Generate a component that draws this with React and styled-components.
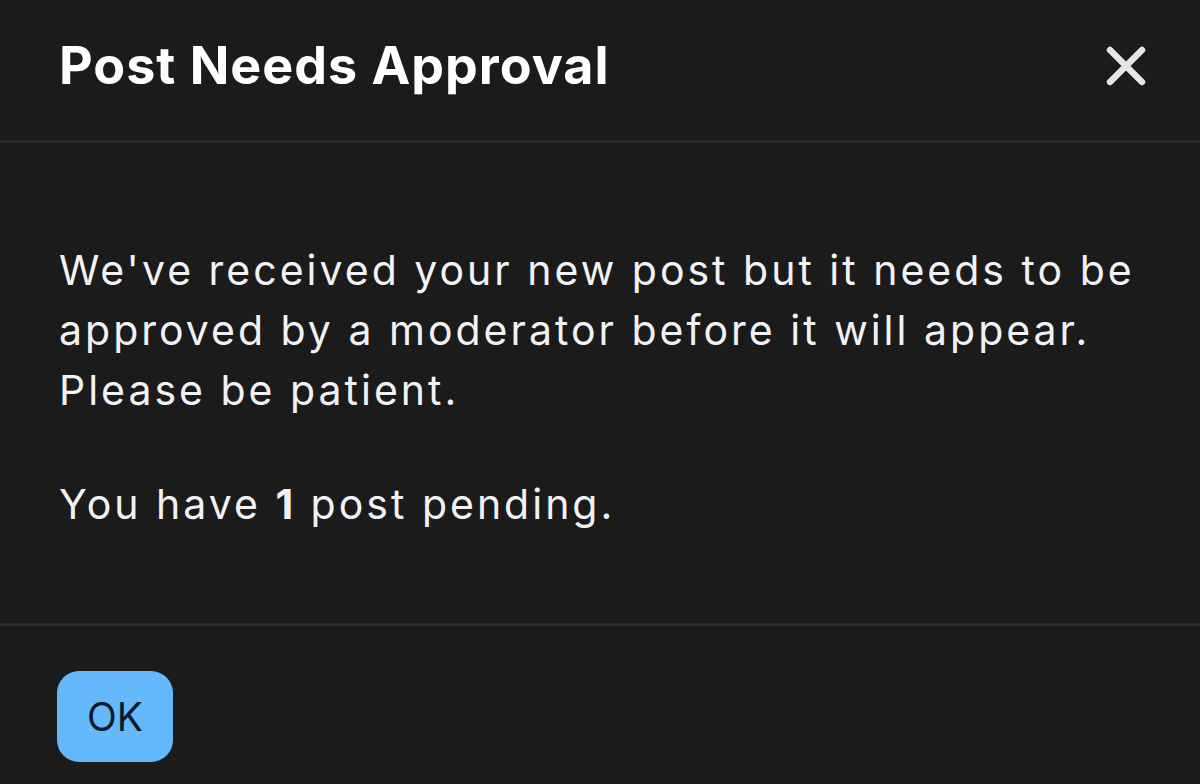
import React from "react";
import styled, { createGlobalStyle } from "styled-components";

const GlobalStyle = createGlobalStyle`
	html, body {
		margin: 0;
		padding: 0;
		background: #1b1b1c;
	}
	body {
		font-family: Inter, "Noto Sans", sans-serif;
		color: #f2f2f4;
	}
`;

const Modal = styled.div`
	width: 1200px;
	height: 784px;
	display: flex;
	flex-direction: column;
	background: #1b1b1c;
	overflow: hidden;
`;

const Header = styled.div`
	height: 143px;
	box-sizing: border-box;
	display: flex;
	align-items: center;
	justify-content: space-between;
	padding: 0 50px 0 59px;
	border-bottom: 3px solid #29292e;
`;

const Title = styled.h2`
	margin: 0 0 9px;
	font-size: 52px;
	font-weight: 700;
	color: #ffffff;
	letter-spacing: 1px;
`;

const CloseButton = styled.button`
	width: 48px;
	height: 48px;
	padding: 0;
	border: none;
	background: none;
	display: flex;
	align-items: center;
	justify-content: center;
	cursor: pointer;
	margin-bottom: 8px;
`;

const Body = styled.div`
	height: 483px;
	box-sizing: border-box;
	padding: 97px 59px 0;
	border-bottom: 3px solid #29292e;
`;

const Paragraph = styled.p`
	margin: 0 0 54px;
	font-size: 41px;
	line-height: 60px;
	font-weight: 400;
	letter-spacing: 3px;
	color: #f2f2f4;

	strong {
		font-weight: 700;
	}
`;

const Footer = styled.div`
	flex: 1;
	padding: 45px 57px 0;
`;

const OkButton = styled.button`
	width: 116px;
	height: 91px;
	border: none;
	border-radius: 22px;
	background: #63b9fb;
	color: #0b1826;
	font-family: Inter, "Noto Sans", sans-serif;
	font-size: 39px;
	font-weight: 400;
	cursor: pointer;
`;

const CloseIcon = () => (
	<svg width="40" height="40" viewBox="0 0 40 40" fill="none">
		<path
			d="M4 4 L36 36 M36 4 L4 36"
			stroke="#e6e6ea"
			strokeWidth="6.5"
			strokeLinecap="round"
		/>
	</svg>
);

const App = () => {
	return (
		<>
			<GlobalStyle />
			<Modal>
				<Header>
					<Title>Post Needs Approval</Title>
					<CloseButton aria-label="Close">
						<CloseIcon />
					</CloseButton>
				</Header>
				<Body>
					<Paragraph>
						We've received your new post but it needs to be approved by a
						moderator before it will appear. Please be patient.
					</Paragraph>
					<Paragraph>
						You have <strong>1</strong> post pending.
					</Paragraph>
				</Body>
				<Footer>
					<OkButton>OK</OkButton>
				</Footer>
			</Modal>
		</>
	);
};

export default App;
